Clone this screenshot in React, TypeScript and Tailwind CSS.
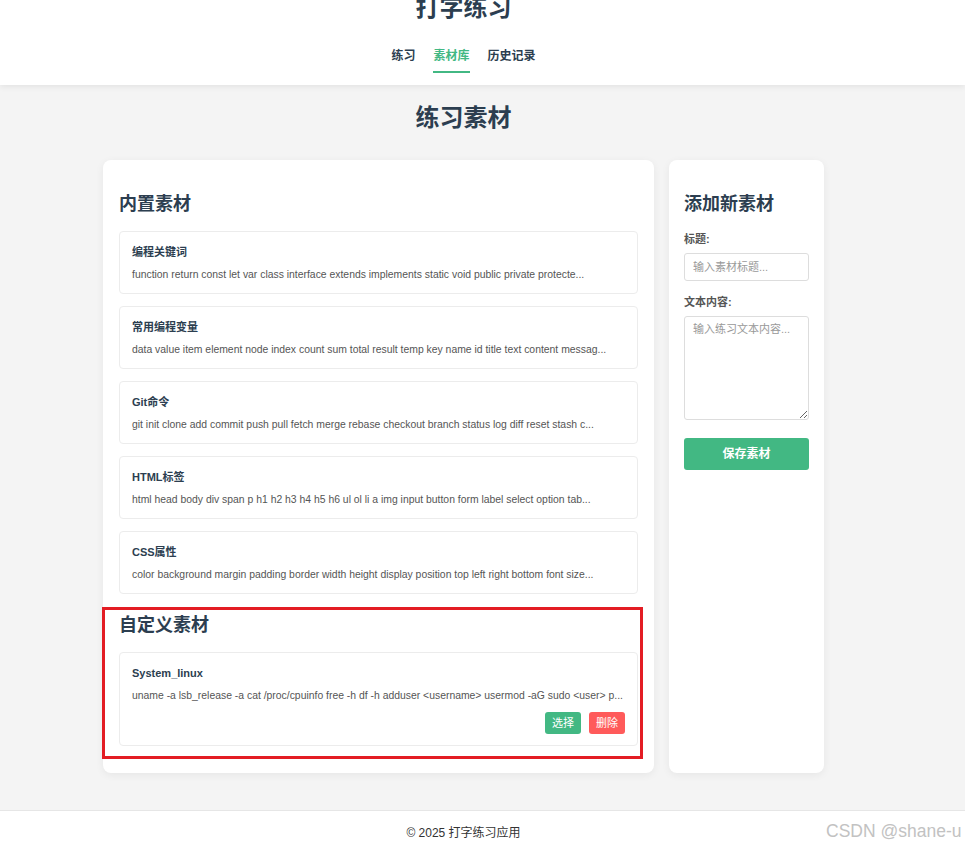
import { useState } from 'react'

type Material = { title: string; text: string }

const BUILTIN: Material[] = [
  { title: '编程关键词', text: 'function return const let var class interface extends implements static void public private protecte...' },
  { title: '常用编程变量', text: 'data value item element node index count sum total result temp key name id title text content messag...' },
  { title: 'Git命令', text: 'git init clone add commit push pull fetch merge rebase checkout branch status log diff reset stash c...' },
  { title: 'HTML标签', text: 'html head body div span p h1 h2 h3 h4 h5 h6 ul ol li a img input button form label select option tab...' },
  { title: 'CSS属性', text: 'color background margin padding border width height display position top left right bottom font size...' },
]

const CUSTOM: Material[] = [
  { title: 'System_linux', text: 'uname -a lsb_release -a cat /proc/cpuinfo free -h df -h adduser <username> usermod -aG sudo <user> p...' },
]

const NAV = ['练习', '素材库', '历史记录']

function MaterialItem({ item, custom }: { item: Material; custom?: boolean }) {
  return (
    <div className="mb-3 rounded-[4px] border border-[#ececec] bg-white px-3 pt-3 pb-[11px] cursor-pointer">
      <div className="h-4 text-[11px] leading-4 font-bold text-[#2c3e50]">{item.title}</div>
      <div className="mt-2 h-[14px] text-[10.4px] leading-[14px] text-[#555] whitespace-nowrap">{item.text}</div>
      {custom && (
        <div className="mt-[9px] flex justify-end gap-2">
          <button type="button" className="h-[22px] w-9 rounded-[3px] bg-[#42b883] text-[11px] text-white">选择</button>
          <button type="button" className="h-[22px] w-9 rounded-[3px] bg-[#ff5a5a] text-[11px] text-white">删除</button>
        </div>
      )}
    </div>
  )
}

export default function App() {
  const [tab, setTab] = useState('素材库')
  const [title, setTitle] = useState('')
  const [content, setContent] = useState('')

  return (
    <div className="relative min-h-screen bg-[#f4f4f4] font-['Liberation_Sans','Noto_Sans_CJK_SC',sans-serif] overflow-hidden">
      <header className="bg-white shadow-[0_2px_6px_rgba(0,0,0,0.07)] relative z-10">
        <div className="w-[927px] flex flex-col items-center pb-[12px]">
          <h1 className="-mt-2 h-8 text-2xl leading-8 font-bold text-[#2c3e50]">打字练习</h1>
          <nav className="mt-[22px] flex gap-[18px]">
            {NAV.map((n) => (
              <button
                key={n}
                type="button"
                onClick={() => setTab(n)}
                className={`h-5 box-content pb-[5px] text-[12px] leading-5 font-bold border-b-2 ${
                  tab === n ? 'text-[#42b883] border-[#42b883]' : 'text-[#2c3e50] border-transparent'
                }`}
              >
                {n}
              </button>
            ))}
          </nav>
        </div>
      </header>

      <main className="w-[927px] pt-[17px] pb-[37px]">
        <h2 className="h-8 text-center text-2xl leading-8 font-bold text-[#2c3e50]">练习素材</h2>

        <div className="mx-auto mt-[26px] flex w-[721px] items-stretch gap-[15px]">
          <section className="relative min-w-0 flex-1 rounded-lg bg-white px-4 pt-4 pb-[15px] shadow-[0_2px_8px_rgba(0,0,0,0.06)]">
            <h3 className="mt-4 mb-[15px] h-6 text-lg leading-6 font-bold text-[#2c3e50]">内置素材</h3>
            {BUILTIN.map((m) => (
              <MaterialItem key={m.title} item={m} />
            ))}
            <h3 className="mt-[19px] mb-[15px] h-6 text-lg leading-6 font-bold text-[#2c3e50]">自定义素材</h3>
            {CUSTOM.map((m) => (
              <MaterialItem key={m.title} item={m} custom />
            ))}
            {/* annotation frame from the screenshot */}
            <div className="pointer-events-none absolute left-[-1px] top-[447px] h-[152px] w-[541px] border-[3px] border-[#e31c23]" />
          </section>

          <aside className="w-[155px] shrink-0 rounded-lg bg-white px-[15px] pt-4 pb-4 shadow-[0_2px_8px_rgba(0,0,0,0.06)]">
            <h3 className="mt-4 mb-4 h-6 text-lg leading-6 font-bold text-[#2c3e50]">添加新素材</h3>
            <label className="block h-[14px] text-[11px] leading-[14px] font-bold text-[#555]">标题:</label>
            <input
              value={title}
              onChange={(e) => setTitle(e.target.value)}
              placeholder="输入素材标题..."
              className="mt-[7px] block h-7 w-full rounded-[3px] border border-[#ddd] px-2 text-[11px] text-[#333] outline-none placeholder:text-[#999]"
            />
            <label className="mt-[14px] block h-[14px] text-[11px] leading-[14px] font-bold text-[#555]">文本内容:</label>
            <textarea
              value={content}
              onChange={(e) => setContent(e.target.value)}
              placeholder="输入练习文本内容..."
              className="mt-[7px] block h-[104px] w-full rounded-[3px] border border-[#ddd] px-2 py-[5px] text-[11px] leading-[14px] text-[#333] outline-none placeholder:text-[#999]"
            />
            <button type="button" className="mt-[18px] h-8 w-full rounded-[3px] bg-[#42b883] text-[12px] font-bold text-white">
              保存素材
            </button>
          </aside>
        </div>
      </main>

      <footer className="border-t border-[#e6e6e6] bg-white">
        <div className="w-[927px] py-[14px] text-center text-[12px] leading-4 text-[#333]">© 2025 打字练习应用</div>
      </footer>

      <div className="pointer-events-none absolute left-[826px] top-[820px] text-[17.5px] leading-[22px] text-[#c2c2c2]">CSDN @shane-u</div>
    </div>
  )
}
